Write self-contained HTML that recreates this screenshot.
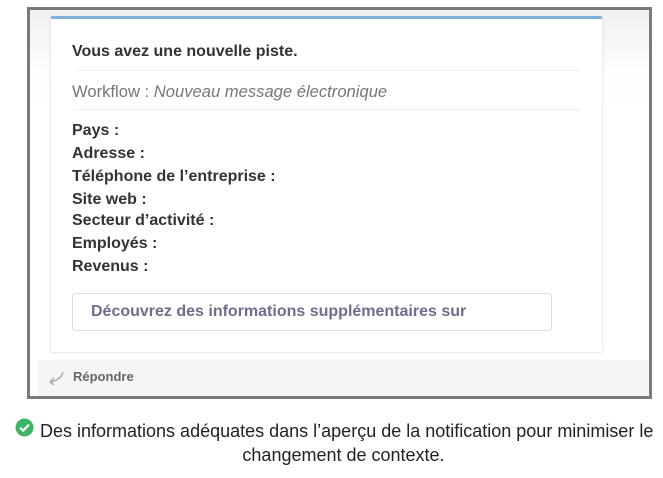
<!DOCTYPE html>
<html><head><meta charset="utf-8"><style>
body{margin:0;width:663px;height:478px;background:#fff;position:relative;font-family:"Liberation Sans",sans-serif;overflow:hidden}
.frame{position:absolute;left:27px;top:7px;width:619px;height:386px;border:3px solid #7a7a7a;background:linear-gradient(#f1f1f1,#fdfdfd 60px,#fff 100px);overflow:hidden}
.card{position:absolute;left:20px;top:6px;width:551px;height:333px;background:#fff;border:1px solid #ececec;border-top:3px solid #7fb0dc;border-radius:3px;box-shadow:0 0 4px rgba(0,0,0,.05)}
.t{position:absolute;left:42px;color:#333;font-weight:bold;font-size:16px}
.hr{position:absolute;left:45px;width:505px;height:1px;background:#eee}
.foot{position:absolute;left:8px;top:350px;width:100%;height:40px;background:#f5f5f5}
.btn{position:absolute;left:42px;top:283px;width:478px;height:36px;border:1px solid #ddd;border-radius:3px;background:#fff;color:#6f6c8c;font-weight:bold;font-size:16px;line-height:36px;text-indent:18px}
.cap{position:absolute;left:0;width:663px;text-align:center;font-size:18px;color:#222}
</style></head><body>
<div class="frame">
<div class="card"></div>
<div class="t" style="top:33px">Vous avez une nouvelle piste.</div>
<div class="hr" style="top:60px"></div>
<div class="t" style="top:72px;font-weight:normal;color:#777;font-size:16.6px">Workflow : <i>Nouveau message électronique</i></div>
<div class="hr" style="top:99px"></div>
<div class="t" style="top:112px">Pays :</div>
<div class="t" style="top:135px">Adresse :</div>
<div class="t" style="top:158px">Téléphone de l’entreprise :</div>
<div class="t" style="top:181px">Site web :</div>
<div class="t" style="top:202px">Secteur d’activité :</div>
<div class="t" style="top:225px">Employés :</div>
<div class="t" style="top:248px">Revenus :</div>
<div class="btn">Découvrez des informations supplémentaires sur</div>
<div class="foot"><svg style="position:absolute;left:8px;top:10px" width="20" height="16" viewBox="0 0 20 16"><path d="M17 2 Q15 10 4 12 M4 12 L8 8 M4 12 L8 15" stroke="#aaa" stroke-width="1.5" fill="none"/></svg><span style="position:absolute;left:35px;top:9px;font-size:13px;font-weight:bold;color:#666">Répondre</span></div>
</div>
<svg style="position:absolute;left:15px;top:418px" width="19" height="19" viewBox="0 0 18 18"><circle cx="9" cy="9" r="8.5" fill="#3cb566"/><path d="M4.8 9.2 L7.7 12 L13.2 6.3" stroke="#fff" stroke-width="2.2" fill="none"/></svg>
<div class="cap" style="top:421px;left:40px;width:700px;text-align:left">Des informations adéquates dans l’aperçu de la notification pour minimiser le</div>
<div class="cap" style="top:445px;left:12px">changement de contexte.</div>
</body></html>
